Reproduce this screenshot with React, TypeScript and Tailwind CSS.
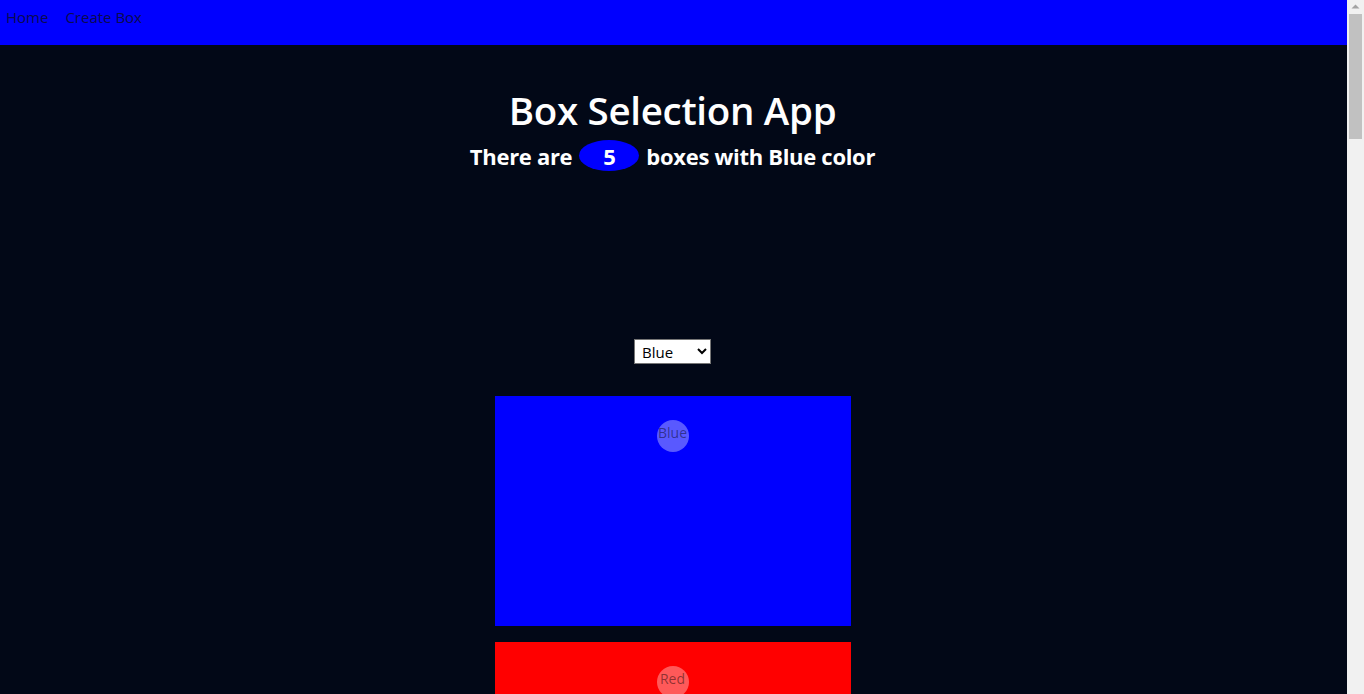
import { useState } from "react";

const boxes = [
  { id: 1, color: "Blue", bg: "bg-[#0000ff]" },
  { id: 2, color: "Red", bg: "bg-[#ff0000]" },
  { id: 3, color: "Blue", bg: "bg-[#0000ff]" },
  { id: 4, color: "Green", bg: "bg-[#008000]" },
  { id: 5, color: "Blue", bg: "bg-[#0000ff]" },
];

function Box({ color, bg }: { color: string; bg: string }) {
  return (
    <div className={`flex h-[230px] w-[356px] shrink-0 justify-center pt-6 ${bg}`}>
      <span className="flex h-8 w-8 items-start justify-center rounded-full bg-white/35 text-[14px] leading-[26px] text-black/45">
        {color}
      </span>
    </div>
  );
}

function ScrollTrack() {
  return (
    <div className="flex w-[17px] shrink-0 flex-col items-center bg-[#f1f1f1]">
      <svg width="17" height="14" viewBox="0 0 17 14" className="shrink-0">
        <path d="M4.5 8.5 L8.5 4.5 L12.5 8.5 Z" fill="#a3a3a3" />
      </svg>
      <div className="h-[125px] w-[13px] bg-[#c1c1c1]" />
    </div>
  );
}

export default function App() {
  const [selected, setSelected] = useState("Blue");

  return (
    <div className="flex h-screen overflow-hidden bg-[#020817] font-['Open_Sans',sans-serif] text-white">
      <main className="min-w-0 flex-1">
        <nav className="flex h-[45px] items-start gap-[17px] bg-[#0000ff] px-[6px] pt-[6px] text-[15px] text-[#0b0b50]">
          <a href="#">Home</a>
          <a href="#">Create Box</a>
        </nav>

        <div className="flex flex-col items-center pr-[2px]">
          <h1 className="mt-[40px] text-[38.5px] font-semibold leading-[50px] tracking-[-0.3px]">
            Box Selection App
          </h1>
          <h2 className="mt-[5px] flex items-center text-[22px] font-bold leading-[30px] tracking-[-0.3px]">
            There are
            <span className="mx-[7px] flex h-[31px] w-[60px] items-center justify-center rounded-[50%] bg-[#0000ff]">
              5
            </span>
            boxes with Blue color
          </h2>

          <select
            value={selected}
            onChange={(e) => setSelected(e.target.value)}
            className="mt-[168px] h-[25px] w-[77px] border border-[#767676] bg-white pl-[3px] text-[15px] text-black"
          >
            <option>Blue</option>
            <option>Red</option>
            <option>Green</option>
          </select>

          <div className="mt-[32px] flex flex-col gap-[16px] pb-10">
            {boxes.map((b) => (
              <Box key={b.id} color={b.color} bg={b.bg} />
            ))}
          </div>
        </div>
      </main>
      <ScrollTrack />
    </div>
  );
}
